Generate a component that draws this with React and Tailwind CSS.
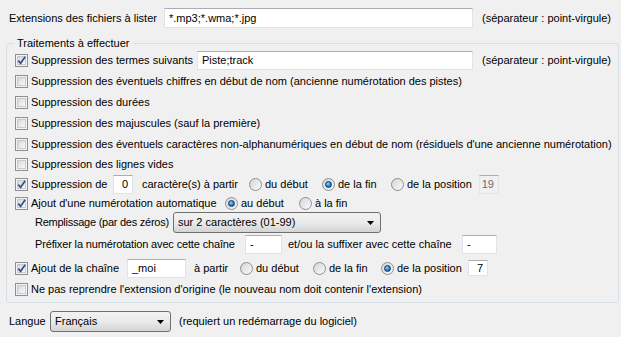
import React from "react";

const font = "font-['Liberation_Sans',Arial,sans-serif]";

function Checkbox({ checked }) {
  return (
    <span className="flex h-[13px] w-[13px] shrink-0 items-center justify-center border border-[#8e8f8f] bg-[#f4f4f4]">
      <span className="relative h-[9px] w-[9px] border border-[#c6cace] bg-gradient-to-br from-[#d4d7dc] to-[#fbfbfb]">
        {checked && (
          <svg viewBox="0 0 9 9" className="absolute left-[-1px] top-[-1px] h-[9px] w-[9px] overflow-visible">
            <path d="M1.3 4.6 L3.6 7.3 L8.2 0.8" fill="none" stroke="#35508e" strokeWidth="1.7" />
          </svg>
        )}
      </span>
    </span>
  );
}

function Radio({ checked }) {
  return (
    <span className="flex h-[13px] w-[13px] shrink-0 items-center justify-center rounded-full border border-[#8e8f8f] bg-gradient-to-br from-[#d2d5da] to-[#fbfbfb]">
      {checked && (
        <span className="h-[7px] w-[7px] rounded-full border border-[#0e3b6b] bg-[radial-gradient(circle_at_40%_35%,#9fd8ff,#2b78c2_55%,#0f4a86)]" />
      )}
    </span>
  );
}

function RadioItem({ checked, label, w }) {
  return (
    <span className={`flex shrink-0 items-center gap-[3px] ${w}`}>
      <Radio checked={checked} />
      <span>{label}</span>
    </span>
  );
}

function TextBox({ value, w, h = "h-[19px]", right, disabled }) {
  return (
    <span
      className={`flex shrink-0 items-center border border-[#e2e3ea] border-t-[#abadb3] px-[4px] ${w} ${h} ${
        right ? "justify-end" : ""
      } ${disabled ? "border-[#c7c7c7] bg-[#f0f0f0] text-[#6d6d6d]" : "bg-white"}`}
    >
      {value}
    </span>
  );
}

function Combo({ value, w }) {
  return (
    <span
      className={`flex h-[21px] shrink-0 items-center justify-between rounded-[3px] border border-[#707070] bg-gradient-to-b from-[#f2f2f2] via-[#ebebeb] to-[#d4d4d4] pl-[4px] pr-[6px] ${w}`}
    >
      <span>{value}</span>
      <svg viewBox="0 0 7 4" className="h-[4px] w-[7px]">
        <path d="M0 0 H7 L3.5 4 Z" fill="#000" />
      </svg>
    </span>
  );
}

function CheckRow({ checked, h, children }) {
  return (
    <div className={`flex items-center ${h}`}>
      <Checkbox checked={checked} />
      <div className="ml-[3px] flex items-center">{children}</div>
    </div>
  );
}

export default function App() {
  return (
    <div
      className={`h-[337px] w-[621px] overflow-hidden whitespace-nowrap bg-[#f0f0f0] text-[11px] leading-[13px] text-black ${font}`}
    >
      <div className="mt-[8px] flex h-[20px] items-center pl-[9px]">
        <span className="w-[155px] shrink-0">Extensions des fichiers à lister</span>
        <TextBox value="*.mp3;*.wma;*.jpg" w="w-[309px]" h="h-[20px]" />
        <span className="ml-[9px]">(séparateur : point-virgule)</span>
      </div>

      <div className="relative ml-[6px] mt-[15px] h-[260px] w-[613px] rounded-[3px] border border-[#d5dfe5] pl-[8px] pt-[6px]">
        <span className="absolute left-[7px] top-[-7px] bg-[#f0f0f0] px-[3px]">Traitements à effectuer</span>

        <CheckRow checked h="h-[21px]">
          <span className="w-[166px] shrink-0">Suppression des termes suivants</span>
          <TextBox value="Piste;track" w="w-[276px]" />
          <span className="ml-[9px]">(séparateur : point-virgule)</span>
        </CheckRow>
        <CheckRow h="h-[21px]">
          <span>Suppression des éventuels chiffres en début de nom (ancienne numérotation des pistes)</span>
        </CheckRow>
        <CheckRow h="h-[21px]">
          <span>Suppression des durées</span>
        </CheckRow>
        <CheckRow h="h-[21px]">
          <span>Suppression des majuscules (sauf la première)</span>
        </CheckRow>
        <CheckRow h="h-[20px]">
          <span>
            Suppression des éventuels caractères non-alphanumériques en début de nom (résiduels d'une ancienne numérotation)
          </span>
        </CheckRow>
        <CheckRow h="h-[20px]">
          <span>Suppression des lignes vides</span>
        </CheckRow>
        <CheckRow checked h="h-[20px]">
          <span className="w-[82px] shrink-0">Suppression de</span>
          <TextBox value="0" w="w-[20px]" right />
          <span className="ml-[9px] w-[107px] shrink-0">caractère(s) à partir</span>
          <RadioItem label="du début" w="w-[73px]" />
          <RadioItem checked label="de la fin" w="w-[69px]" />
          <RadioItem label="de la position" w="w-[88px]" />
          <TextBox value="19" w="w-[20px]" right disabled />
        </CheckRow>
        <CheckRow checked h="h-[18px]">
          <span className="w-[194px] shrink-0">Ajout d'une numérotation automatique</span>
          <RadioItem checked label="au début" w="w-[74px]" />
          <RadioItem label="à la fin" w="w-[70px]" />
        </CheckRow>
        <div className="flex h-[21px] items-center pl-[20px]">
          <span className="w-[138px] shrink-0 tracking-[-0.25px]">Remplissage (par des zéros)</span>
          <Combo value="sur 2 caractères (01-99)" w="w-[208px]" />
        </div>
        <div className="flex h-[23px] items-center pl-[20px]">
          <span className="w-[210px] shrink-0 tracking-[-0.15px]">Préfixer la numérotation avec cette chaîne</span>
          <TextBox value="-" w="w-[37px]" />
          <span className="ml-[6px] w-[174px] shrink-0">et/ou la suffixer avec cette chaîne</span>
          <TextBox value="-" w="w-[35px]" />
        </div>
        <CheckRow checked h="h-[24px]">
          <span className="w-[96px] shrink-0">Ajout de la chaîne</span>
          <TextBox value="_moi" w="w-[59px]" />
          <span className="ml-[8px] w-[46px] shrink-0">à partir</span>
          <RadioItem label="du début" w="w-[73px]" />
          <RadioItem label="de la fin" w="w-[68px]" />
          <RadioItem checked label="de la position" w="w-[87px]" />
          <TextBox value="7" w="w-[20px]" h="h-[16px]" right />
        </CheckRow>
        <CheckRow h="h-[19px]">
          <span>Ne pas reprendre l'extension d'origine (le nouveau nom doit contenir l'extension)</span>
        </CheckRow>
      </div>

      <div className="mt-[8px] flex h-[21px] items-center pl-[9px]">
        <span className="w-[41px] shrink-0">Langue</span>
        <Combo value="Français" w="w-[121px]" />
        <span className="ml-[8px]">(requiert un redémarrage du logiciel)</span>
      </div>
    </div>
  );
}
